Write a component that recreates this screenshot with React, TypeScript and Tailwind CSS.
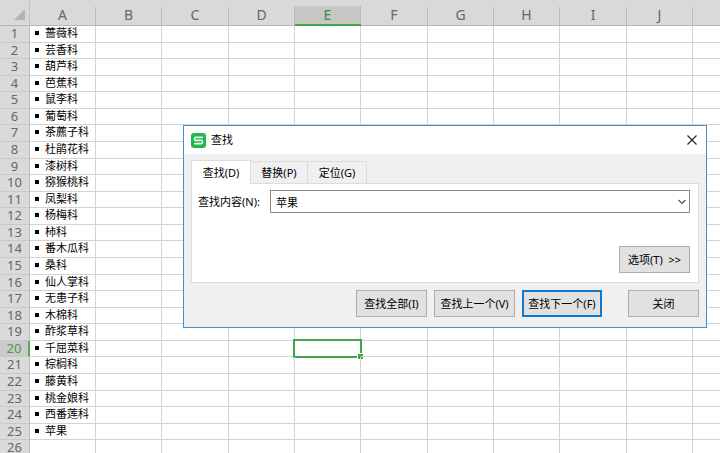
import { useState } from "react";
import type { ReactNode } from "react";

const columns = ["A", "B", "C", "D", "E", "F", "G", "H", "I", "J", ""];

const families = [
  "蔷薇科", "芸香科", "葫芦科", "芭蕉科", "鼠李科", "葡萄科", "茶藨子科",
  "杜鹃花科", "漆树科", "猕猴桃科", "凤梨科", "杨梅科", "柿科", "番木瓜科",
  "桑科", "仙人掌科", "无患子科", "木棉科", "酢浆草科", "千屈菜科", "棕榈科",
  "藤黄科", "桃金娘科", "西番莲科", "苹果", "",
];

const SELECTED_ROW = 20;
const SELECTED_COLUMN = "E";

function SheetRow({ number, text }: { number: number; text: string }) {
  const height = ((number - 1) % 7) % 2 ? "h-[16px]" : "h-[17px]";
  const active = number === SELECTED_ROW;
  return (
    <tr className={height}>
      <th
        scope="row"
        className={`border-b p-0 text-center align-top text-[13px] leading-[14px] font-normal ${
          active
            ? "border-r-2 border-r-[#4caf50] border-b-[#c9c9c9] bg-[#cbcbcb] text-[#4a9a4a]"
            : "border-r border-r-[#bdbdbd] border-b-[#c9c9c9] bg-[#dadada] text-[#666]"
        }`}
      >
        <div className="h-[14px]">{number}</div>
      </th>
      {columns.map((column, i) => (
        <td key={i} className="relative border-r border-b border-[#d4d4d4] p-0 align-top last:border-r-0">
          {column === "A" && text && (
            <div className="flex h-[14px] items-center gap-[6px] pl-[5px] text-[11px] leading-[14px] whitespace-nowrap text-black">
              <span className="size-[4px] bg-black" />
              {text}
            </div>
          )}
          {active && column === SELECTED_COLUMN && (
            <div className="absolute -inset-x-[2px] -inset-y-[2px] border-2 border-[#43a547]">
              <span className="absolute -right-[3px] -bottom-[3px] size-[6px] border-t border-l border-white bg-[#43a547]" />
            </div>
          )}
        </td>
      ))}
    </tr>
  );
}

function Sheet() {
  return (
    <table className="w-full table-fixed border-separate border-spacing-0">
      <colgroup>
        <col className="w-[30px]" />
        {columns.map((column, i) => (
          <col key={i} className={column === "" ? "" : i % 3 === 2 ? "w-[67px]" : "w-[66px]"} />
        ))}
      </colgroup>
      <thead>
        <tr className="h-[26px]">
          <td className="border-r border-b border-[#b5b5b5] border-r-[#c4c4c4] bg-[#d9d9d9] p-0">
            <svg className="mt-[4px] ml-[14px] block size-[11px]" viewBox="0 0 11 11" aria-hidden="true">
              <path d="M11 0v11H0z" fill="#b4b4b4" />
            </svg>
          </td>
          {columns.map((column, i) => {
            const active = column === SELECTED_COLUMN;
            return (
              <th
                key={i}
                scope="col"
                className={`group bg-[#d9d9d9] p-0 text-[14px] leading-[15px] font-normal ${
                  active ? "border-b-2 border-b-[#43a547] text-[#3c8a4c]" : "border-b border-b-[#b5b5b5] text-[#666]"
                }`}
              >
                <div className={`flex flex-col justify-end ${active ? "h-[24px]" : "h-[25px]"}`}>
                  <div className={`h-[18px] border-r border-[#bababa] group-last:border-r-0 ${active ? "bg-[#c6c6c6] pt-px" : ""}`}>
                    {column}
                  </div>
                </div>
              </th>
            );
          })}
        </tr>
      </thead>
      <tbody>
        {families.map((text, i) => (
          <SheetRow key={i} number={i + 1} text={text} />
        ))}
      </tbody>
    </table>
  );
}

function DialogButton({ width, primary, children }: { width: string; primary?: boolean; children: ReactNode }) {
  return (
    <button
      type="button"
      className={`flex h-[27px] items-center justify-center bg-[#e1e1e1] whitespace-nowrap ${width} ${
        primary ? "border-2 border-[#0f7ad4]" : "border border-[#adadad]"
      }`}
    >
      {children}
    </button>
  );
}

function FindDialog() {
  const [query, setQuery] = useState("苹果");
  return (
    <section
      role="dialog"
      aria-labelledby="find-title"
      className="absolute top-[125px] left-[183px] w-[524px] border border-[#3f8fd2] bg-[#f0f0f0] text-[11px] leading-[16px] text-black"
    >
      <header className="flex h-[28px] items-center bg-white pr-[9px] pl-[7px]">
        <svg className="mr-[5px] size-[15px]" viewBox="0 0 15 15" aria-hidden="true">
          <rect width="15" height="15" rx="3" fill="#21b84b" />
          <path d="M12 4.4H4.6Q3.4 4.4 3.4 5.9T4.6 7.4h5.8Q11.6 7.4 11.6 9T10.4 10.6H3" fill="none" stroke="#e9fbee" strokeWidth="1.6" />
        </svg>
        <h1 id="find-title" className="flex-1">查找</h1>
        <button type="button" aria-label="关闭窗口">
          <svg className="block size-[10px]" viewBox="0 0 10 10" fill="none" stroke="#222" strokeWidth="1.1" aria-hidden="true">
            <path d="M.5 .5l9 9M9.500 .5l-9 9" />
          </svg>
        </button>
      </header>

      <div className="px-[7px] pt-[6px]">
        <div role="tablist" className="flex items-end">
          <button type="button" role="tab" aria-selected="true" className="z-10 -mb-px h-[24px] w-[60px] border border-b-0 border-[#dcdcdc] bg-white">
            查找(D)
          </button>
          <button type="button" role="tab" aria-selected="false" className="h-[22px] w-[57px] border border-b-0 border-l-0 border-[#dcdcdc]">
            替换(P)
          </button>
          <button type="button" role="tab" aria-selected="false" className="h-[22px] w-[59px] border border-b-0 border-l-0 border-[#dcdcdc]">
            定位(G)
          </button>
        </div>
        <div role="tabpanel" className="flex flex-col border border-[#dcdcdc] bg-white pt-[6px] pr-[8px] pb-[9px] pl-[6px]">
          <div className="flex items-center">
            <label htmlFor="find-text" className="w-[72px]">查找内容(N):</label>
            <div className="flex h-[23px] flex-1 items-center border border-[#8a8a8a]">
              <input
                id="find-text"
                type="text"
                value={query}
                onChange={(e) => setQuery(e.target.value)}
                className="h-full min-w-0 flex-1 bg-white pl-[5px] outline-none"
              />
              <button type="button" aria-label="历史记录" className="px-[3px]">
                <svg className="block h-[6px] w-[8px]" viewBox="0 0 8 6" fill="none" stroke="#555" strokeWidth="1.2" aria-hidden="true">
                  <path d="M.5 1L4 4.5 7.5 1" />
                </svg>
              </button>
            </div>
          </div>
          <div className="mt-[33px] flex justify-end">
            <DialogButton width="w-[71px]">选项(T)&nbsp; &gt;&gt;</DialogButton>
          </div>
        </div>
      </div>

      <footer className="flex justify-end gap-[7px] pt-[7px] pr-[7px] pb-[10px]">
        <DialogButton width="w-[71px]">查找全部(I)</DialogButton>
        <DialogButton width="w-[81px]">查找上一个(V)</DialogButton>
        <DialogButton width="w-[80px]" primary>查找下一个(F)</DialogButton>
        <div className="ml-[19px]">
          <DialogButton width="w-[71px]">关闭</DialogButton>
        </div>
      </footer>
    </section>
  );
}

export default function App() {
  return (
    <main className="relative h-screen overflow-hidden bg-white font-['Noto_Sans','Noto_Sans_CJK_SC',sans-serif]">
      <Sheet />
      <FindDialog />
    </main>
  );
}
